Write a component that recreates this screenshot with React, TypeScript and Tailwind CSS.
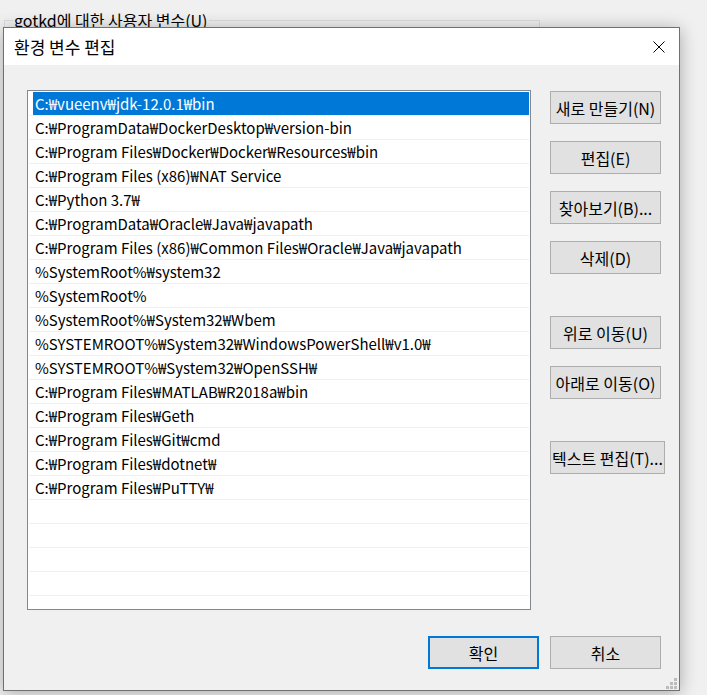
import React from "react";

const items = [
  "C:₩vueenv₩jdk-12.0.1₩bin",
  "C:₩ProgramData₩DockerDesktop₩version-bin",
  "C:₩Program Files₩Docker₩Docker₩Resources₩bin",
  "C:₩Program Files (x86)₩NAT Service",
  "C:₩Python 3.7₩",
  "C:₩ProgramData₩Oracle₩Java₩javapath",
  "C:₩Program Files (x86)₩Common Files₩Oracle₩Java₩javapath",
  "%SystemRoot%₩system32",
  "%SystemRoot%",
  "%SystemRoot%₩System32₩Wbem",
  "%SYSTEMROOT%₩System32₩WindowsPowerShell₩v1.0₩",
  "%SYSTEMROOT%₩System32₩OpenSSH₩",
  "C:₩Program Files₩MATLAB₩R2018a₩bin",
  "C:₩Program Files₩Geth",
  "C:₩Program Files₩Git₩cmd",
  "C:₩Program Files₩dotnet₩",
  "C:₩Program Files₩PuTTY₩",
];

const emptyRows = [0, 1, 2, 3, 4];

function Btn({ label, wide, className = "" }: { label: string; wide?: boolean; className?: string }) {
  return (
    <button
      className={
        "shrink-0 h-[33px] border border-[#adadad] bg-[#e1e1e1] text-[16px] leading-none text-black flex items-center justify-center whitespace-nowrap " +
        (wide ? "w-[115px] " : "w-[111px] ") +
        className
      }
    >
      {label}
    </button>
  );
}

export default function App() {
  return (
    <div className="relative w-[707px] h-[695px] overflow-hidden bg-[#f0f0f0] font-['Noto_Sans_CJK_KR',sans-serif] text-black">
      {/* background window group box */}
      <div className="relative ml-[4px] mt-[20px] w-[536px] h-[30px] border-t border-l border-r border-[#dcdcdc]">
        <span className="absolute left-[8px] -top-[11px] bg-[#f0f0f0] px-[1px] text-[16px] leading-[20px] whitespace-nowrap">
          gotkd에 대한 사용자 변수(U)
        </span>
      </div>

      {/* dialog */}
      <div className="absolute left-[3px] top-[27px] w-[677px] h-[664px] border border-[#707070] bg-[#f0f0f0] shadow-[0_2px_16px_rgba(0,0,0,0.3)] flex flex-col">
        <div className="h-[37px] shrink-0 bg-white flex items-center justify-between pl-[10px] pr-[14px]">
          <span className="text-[17px] leading-none">환경 변수 편집</span>
          <svg width="12" height="12" viewBox="0 0 12 12">
            <path d="M0.5 0.5 L11.5 11.5 M11.5 0.5 L0.5 11.5" stroke="#000" strokeWidth="1" fill="none" />
          </svg>
        </div>

        <div className="relative flex-1 flex flex-col pl-[23px] pt-[25px] pr-[18px]">
          <div className="flex gap-[19px]">
            <div className="shrink-0 w-[504px] h-[520px] border border-[#828790] bg-white overflow-hidden">
              {items.map((t, i) => (
                <div
                  key={i}
                  className={
                    "h-[24px] mx-[1px] border-t " +
                    (i === 0 ? "border-white" : "border-[#f0f0f0]")
                  }
                >
                  {i === 0 ? (
                    <div className="ml-[4px] h-[23px] bg-[#0078d7] text-white text-[15px] leading-[23px] pl-[2px] whitespace-nowrap">
                      {t}
                    </div>
                  ) : (
                    <div className="h-[23px] text-[15px] leading-[23px] pl-[6px] whitespace-nowrap">{t}</div>
                  )}
                </div>
              ))}
              {emptyRows.map((k) => (
                <div key={"e" + k} className="h-[24px] mx-[1px] border-t border-[#f0f0f0]" />
              ))}
            </div>

            <div className="shrink-0 w-[111px] flex flex-col items-start pt-[1px]">
              <Btn label="새로 만들기(N)" />
              <Btn label="편집(E)" className="mt-[17px]" />
              <Btn label="찾아보기(B)..." className="mt-[17px]" />
              <Btn label="삭제(D)" className="mt-[17px]" />
              <Btn label="위로 이동(U)" className="mt-[42px]" />
              <Btn label="아래로 이동(O)" className="mt-[17px]" />
              <Btn label="텍스트 편집(T)..." wide className="mt-[42px]" />
            </div>
          </div>

          <div className="flex justify-end gap-[11px] mt-[26px]">
            <button className="shrink-0 w-[111px] h-[33px] border-2 border-[#0078d7] bg-[#e1e1e1] text-[16px] leading-none flex items-center justify-center">
              확인
            </button>
            <Btn label="취소" />
          </div>

          <svg className="absolute right-[2px] bottom-[1px]" width="11" height="11" viewBox="0 0 11 11">
            <rect x="8" y="0" width="3" height="3" fill="#bcbcbc" />
            <rect x="4" y="4" width="3" height="3" fill="#bcbcbc" />
            <rect x="8" y="4" width="3" height="3" fill="#bcbcbc" />
            <rect x="0" y="8" width="3" height="3" fill="#bcbcbc" />
            <rect x="4" y="8" width="3" height="3" fill="#bcbcbc" />
            <rect x="8" y="8" width="3" height="3" fill="#bcbcbc" />
          </svg>
        </div>
      </div>
    </div>
  );
}
